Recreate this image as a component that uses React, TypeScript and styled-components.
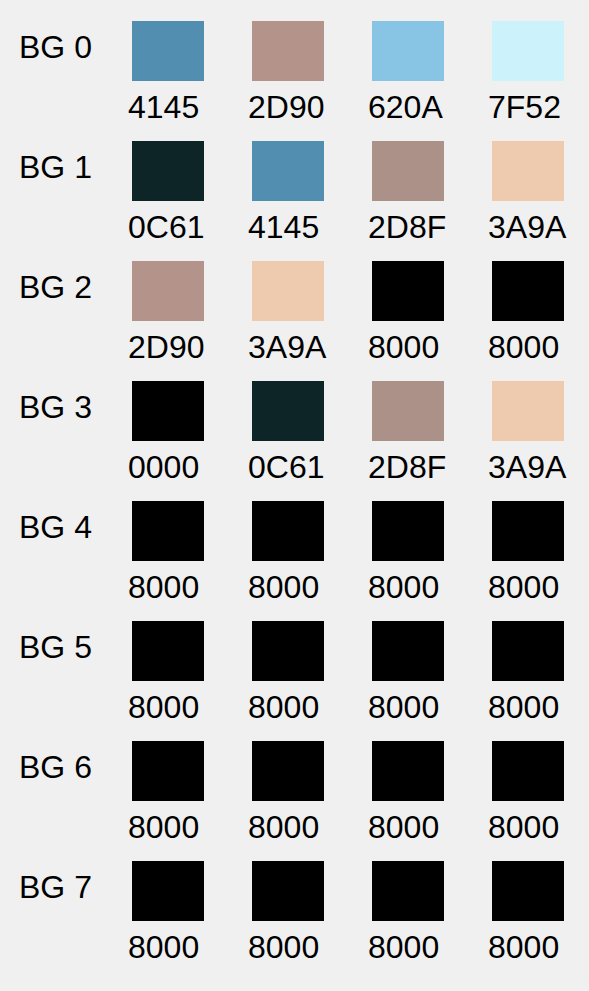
import React from "react";
import styled, { createGlobalStyle } from "styled-components";

const GlobalStyle = createGlobalStyle`
  body {
    margin: 0;
    background: #f0f0f0;
    color: #000;
    font-family: "Liberation Sans", Arial, sans-serif;
  }
`;

const Palettes = styled.main`
  display: flex;
  flex-direction: column;
  gap: 16px;
  padding: 21px 21px 26px 19px;
`;

const PaletteRow = styled.section`
  display: flex;
`;

const PaletteName = styled.h2`
  flex: 0 0 109px;
  margin: 8px 0 0;
  font-size: 32px;
  line-height: 36px;
  font-weight: 400;
  white-space: nowrap;
`;

const Entries = styled.div`
  flex: 1;
  display: grid;
  grid-template-columns: repeat(4, minmax(0, 1fr));
  column-gap: 40px;
`;

const Entry = styled.figure`
  margin: 0;
`;

const Swatch = styled.div<{ $color: string }>`
  height: 60px;
  margin: 0 4px;
  background: ${(p) => p.$color};
`;

const Code = styled.figcaption`
  margin-top: 8px;
  font-size: 32px;
  line-height: 36px;
  white-space: nowrap;
`;

const colors: Record<string, string> = {
  "4145": "#528eb0",
  "2D90": "#b4938b",
  "620A": "#88c4e4",
  "7F52": "#ccf2fb",
  "0C61": "#0e2527",
  "2D8F": "#ac9189",
  "3A9A": "#eecbae",
  "8000": "#000000",
  "0000": "#000000",
};

const palettes = [
  ["4145", "2D90", "620A", "7F52"],
  ["0C61", "4145", "2D8F", "3A9A"],
  ["2D90", "3A9A", "8000", "8000"],
  ["0000", "0C61", "2D8F", "3A9A"],
  ["8000", "8000", "8000", "8000"],
  ["8000", "8000", "8000", "8000"],
  ["8000", "8000", "8000", "8000"],
  ["8000", "8000", "8000", "8000"],
];

export default function App() {
  return (
    <>
      <GlobalStyle />
      <Palettes>
        {palettes.map((codes, row) => (
          <PaletteRow key={row}>
            <PaletteName>BG {row}</PaletteName>
            <Entries>
              {codes.map((code, i) => (
                <Entry key={i}>
                  <Swatch $color={colors[code]} />
                  <Code>{code}</Code>
                </Entry>
              ))}
            </Entries>
          </PaletteRow>
        ))}
      </Palettes>
    </>
  );
}
